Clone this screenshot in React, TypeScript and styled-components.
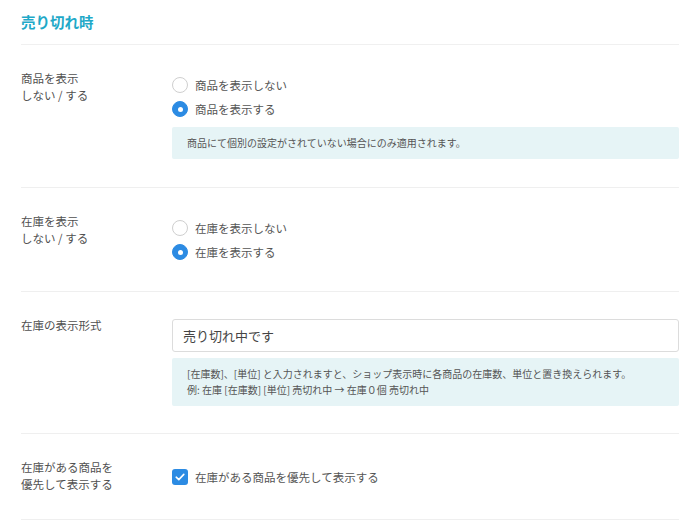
import React from "react";
import styled, { createGlobalStyle } from "styled-components";

const Global = createGlobalStyle`
  html, body { margin: 0; padding: 0; background: #fff; }
  body { font-family: "Noto Sans CJK JP", "Noto Sans", sans-serif; color: #555; }
`;

const Page = styled.div`
  padding: 0 21px 0 21px;
  width: 658px;
`;

const Title = styled.h2`
  margin: 0;
  height: 45px;
  box-sizing: border-box;
  padding-top: 11px;
  font-size: 14.5px;
  line-height: 22px;
  font-weight: 700;
  color: #1fa9c8;
  border-bottom: 1px solid #f0f0f0;
`;

const Row = styled.div<{ $bottom?: number }>`
  display: grid;
  grid-template-columns: 151px 1fr;
  padding: 25px 0 ${(p) => p.$bottom ?? 27}px;
  border-bottom: 1px solid #efefef;
`;

const Label = styled.div`
  font-size: 11.5px;
  line-height: 16.5px;
  color: #505050;
`;

const Content = styled.div<{ $top?: number }>`
  display: flex;
  flex-direction: column;
  padding-top: ${(p) => p.$top ?? 0}px;
`;

const Option = styled.label`
  display: flex;
  align-items: center;
  height: 24px;
  gap: 7px;
  font-size: 11.5px;
  color: #555;
`;

const Radio = styled.span<{ $on?: boolean }>`
  box-sizing: border-box;
  width: 16px;
  height: 16px;
  border-radius: 50%;
  flex: none;
  display: flex;
  align-items: center;
  justify-content: center;
  background: ${(p) => (p.$on ? "#2c8be3" : "#fff")};
  border: 1px solid ${(p) => (p.$on ? "#2c8be3" : "#cfcfcf")};
  &::after {
    content: "";
    display: ${(p) => (p.$on ? "block" : "none")};
    width: 5px;
    height: 5px;
    border-radius: 50%;
    background: #fff;
  }
`;

const Check = styled.span`
  box-sizing: border-box;
  width: 16px;
  height: 16px;
  border-radius: 3px;
  flex: none;
  background: #2c8be3;
  display: flex;
  align-items: center;
  justify-content: center;
`;

const Note = styled.div<{ $gap?: number }>`
  margin-top: ${(p) => p.$gap ?? 6}px;
  background: #e6f4f6;
  border-radius: 2px;
  padding: 8px 15px;
  font-size: 10px;
  line-height: 16px;
  color: #555;
`;

const Input = styled.input`
  box-sizing: border-box;
  width: 100%;
  height: 33px;
  margin-top: 2px;
  border: 1px solid #dcdcdc;
  border-radius: 3px;
  padding: 0 10px;
  font-family: "Noto Sans CJK JP", "Noto Sans", sans-serif;
  font-size: 13px;
  color: #444;
  outline: none;
`;

export default function App() {
  return (
    <Page>
      <Global />
      <Title>売り切れ時</Title>

      <Row $bottom={28}>
        <Label>
          商品を表示
          <br />
          しない / する
        </Label>
        <Content $top={3}>
          <Option>
            <Radio />
            商品を表示しない
          </Option>
          <Option>
            <Radio $on />
            商品を表示する
          </Option>
          <Note>商品にて個別の設定がされていない場合にのみ適用されます。</Note>
        </Content>
      </Row>

      <Row>
        <Label>
          在庫を表示
          <br />
          しない / する
        </Label>
        <Content $top={3}>
          <Option>
            <Radio />
            在庫を表示しない
          </Option>
          <Option>
            <Radio $on />
            在庫を表示する
          </Option>
        </Content>
      </Row>

      <Row>
        <Label>在庫の表示形式</Label>
        <Content>
          <Input defaultValue="売り切れ中です" />
          <Note>
            [在庫数]、[単位] と入力されますと、ショップ表示時に各商品の在庫数、単位と置き換えられます。
            <br />
            例: 在庫 [在庫数] [単位] 売切れ中 → 在庫０個 売切れ中
          </Note>
        </Content>
      </Row>

      <Row $bottom={27}>
        <Label>
          在庫がある商品を
          <br />
          優先して表示する
        </Label>
        <Content $top={6}>
          <Option>
            <Check>
              <svg width="10" height="8" viewBox="0 0 10 8">
                <path d="M1.2 4.2 L3.8 6.6 L8.8 1.4" fill="none" stroke="#fff" strokeWidth="1.6" strokeLinecap="round" strokeLinejoin="round" />
              </svg>
            </Check>
            在庫がある商品を優先して表示する
          </Option>
        </Content>
      </Row>
    </Page>
  );
}
